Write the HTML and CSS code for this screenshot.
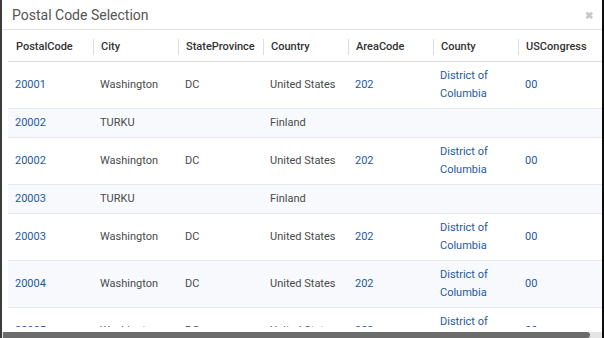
FILE: index.html
```html
<!DOCTYPE html>
<html>
<head>
<meta charset="utf-8">
<link rel="stylesheet" href="styles.css">
</head>
<body>
<div class="modal">
  <div class="modal-header">
    <span class="title">Postal Code Selection</span>
    <span class="close">&#10006;</span>
  </div>
  <div class="modal-body">
    <table class="grid">
      <colgroup>
        <col class="c"><col class="c"><col class="c"><col class="c"><col class="c"><col class="c"><col class="c">
      </colgroup>
      <thead>
        <tr>
          <th><span class="h first">PostalCode</span></th>
          <th><span class="h">City</span></th>
          <th><span class="h">StateProvince</span></th>
          <th><span class="h">Country</span></th>
          <th><span class="h">AreaCode</span></th>
          <th><span class="h">County</span></th>
          <th><span class="h">USCongress</span></th>
        </tr>
      </thead>
      <tbody>
        <tr><td class="l">20001</td><td>Washington</td><td>DC</td><td>United States</td><td class="l">202</td><td class="l">District of Columbia</td><td class="l">00</td></tr>
        <tr class="alt"><td class="l">20002</td><td>TURKU</td><td></td><td>Finland</td><td class="l"></td><td class="l"></td><td class="l"></td></tr>
        <tr><td class="l">20002</td><td>Washington</td><td>DC</td><td>United States</td><td class="l">202</td><td class="l">District of Columbia</td><td class="l">00</td></tr>
        <tr class="alt"><td class="l">20003</td><td>TURKU</td><td></td><td>Finland</td><td class="l"></td><td class="l"></td><td class="l"></td></tr>
        <tr><td class="l">20003</td><td>Washington</td><td>DC</td><td>United States</td><td class="l">202</td><td class="l">District of Columbia</td><td class="l">00</td></tr>
        <tr class="alt"><td class="l">20004</td><td>Washington</td><td>DC</td><td>United States</td><td class="l">202</td><td class="l">District of Columbia</td><td class="l">00</td></tr>
        <tr><td class="l">20005</td><td>Washington</td><td>DC</td><td>United States</td><td class="l">202</td><td class="l">District of Columbia</td><td class="l">00</td></tr>
      </tbody>
    </table>
  </div>
  <div class="hscroll"><div class="thumb"></div></div>
</div>
</body>
</html>
```
FILE: styles.css
```css
html, body {
  margin: 0;
  padding: 0;
  background: #fff;
}
.modal {
  width: 600px;
  height: 338px;
  border-left: 2px solid #3c3c3c;
  border-right: 2px solid #0c0c0c;
  display: flex;
  flex-direction: column;
  font-family: Roboto, "Liberation Sans", sans-serif;
  overflow: hidden;
  background: #fff;
}
.modal-header {
  height: 29px;
  flex: 0 0 29px;
  border-bottom: 1px solid #e3e3e3;
  display: flex;
  align-items: center;
  justify-content: space-between;
  padding: 0 9px 0 10px;
}
.title {
  font-size: 14px;
  color: #555;
}
.close {
  font-size: 10px;
  color: #c6c6c6;
  font-weight: bold;
  padding-top: 1px;
}
.modal-body {
  flex: 1 1 auto;
  overflow: hidden;
  padding-left: 6px;
  margin-bottom: 5px;
}
.grid {
  border-collapse: collapse;
  table-layout: fixed;
  width: 595px;
  font-size: 11px;
}
.c {
  width: 85px;
}
.grid th {
  height: 29px;
  padding: 2px 0 0 0;
  text-align: left;
  font-weight: 500;
  color: #333;
  border-bottom: 1px solid #dcdcdc;
  vertical-align: middle;
  white-space: nowrap;
}
.h {
  display: block;
  padding-left: 7px;
  border-left: 1px solid #dedede;
  line-height: 16px;
}
.h.first {
  border-left-color: transparent;
}
.grid td {
  padding: 5px 7px;
  line-height: 18px;
  color: #4a4a4a;
  border-bottom: 1px solid #e6e8ec;
  vertical-align: middle;
}
.grid td.l {
  color: #25599f;
}
.grid tr.alt td {
  background: #f7f9fd;
}
.hscroll {
  flex: 0 0 6px;
  height: 6px;
  background: #e4e4e4;
  display: flex;
}
.thumb {
  margin-left: 1px;
  width: 587px;
  height: 6px;
  background: #6b6b6b;
  border-radius: 0 3px 3px 0;
}
```
